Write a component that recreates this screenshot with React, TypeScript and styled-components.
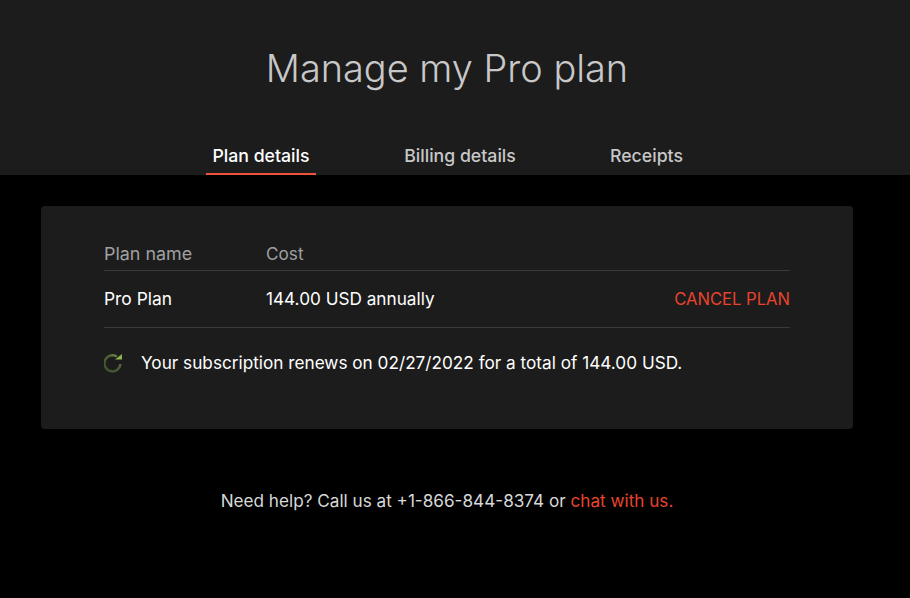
import React from "react";
import styled, { createGlobalStyle } from "styled-components";

const Global = createGlobalStyle`
  html, body { margin: 0; background: #000; }
  body { font-family: Inter, "Open Sans", sans-serif; }
`;
const Header = styled.header`
  background: #1c1c1c;
  height: 175px;
  padding-right: 16px;
  display: flex;
  flex-direction: column;
  align-items: center;
`;
const Title = styled.h1`
  margin: 41px 0 0;
  height: 95px;
  font-size: 37.9px;
  line-height: 54px;
  font-weight: 300;
  color: #c8c8c8;
`;
const Tabs = styled.nav`
  display: flex;
  gap: 81px;
  margin-left: 1px;
`;
const Tab = styled.a<{ $active?: boolean; $w: number }>`
  width: ${(p) => p.$w}px;
  height: 39px;
  box-sizing: border-box;
  text-align: center;
  font-size: 17.7px;
  font-weight: 500;
  line-height: 40px;
  color: ${(p) => (p.$active ? "#fff" : "#c8c8c8")};
  border-bottom: 2px solid ${(p) => (p.$active ? "#f0543f" : "transparent")};
`;
const Card = styled.section`
  margin: 31px 57px 0 41px;
  height: 223px;
  box-sizing: border-box;
  padding: 32px 63px 0;
  background: #1c1c1c;
  border-radius: 4px;
`;
const Row = styled.div<{ $h: number }>`
  display: flex;
  align-items: center;
  box-sizing: content-box;
  height: ${(p) => p.$h - 1}px;
  padding-bottom: 1px;
  border-bottom: 1px solid #3a3a3a;
  font-size: 17.2px;
  line-height: 22px;
  color: #fff;
`;
const Name = styled.span<{ $muted?: boolean }>`
  width: 162px;
  font-size: ${(p) => (p.$muted ? "17.9px" : "17.4px")};
  color: ${(p) => (p.$muted ? "#a0a0a0" : "#fff")};
`;
const Cost = styled.span<{ $muted?: boolean }>`
  flex: 1;
  color: ${(p) => (p.$muted ? "#a0a0a0" : "#fff")};
`;
const Cancel = styled.a`
  font-size: 16.6px;
  color: #e8432e;
`;
const Renew = styled.div`
  display: flex;
  align-items: center;
  gap: 17px;
  height: 69px;
  font-size: 17.2px;
  color: #fff;
`;
const Help = styled.p`
  margin: 61px 16px 0 0;
  text-align: center;
  font-size: 17.15px;
  color: #d8d8d8;
`;
const Link = styled.a`
  color: #e8432e;
`;

export default function App() {
  return (
    <>
      <Global />
      <Header>
        <Title>Manage my Pro plan</Title>
        <Tabs>
          <Tab $active $w={110}>Plan details</Tab>
          <Tab $w={126}>Billing details</Tab>
          <Tab $w={85}>Receipts</Tab>
        </Tabs>
      </Header>
      <Card>
        <Row $h={32}>
          <Name $muted>Plan name</Name>
          <Cost $muted>Cost</Cost>
        </Row>
        <Row $h={56}>
          <Name>Pro Plan</Name>
          <Cost>144.00 USD annually</Cost>
          <Cancel>CANCEL PLAN</Cancel>
        </Row>
        <Renew>
          <svg width="20" height="20" viewBox="0 0 20 20" fill="none">
            <defs>
              <linearGradient id="ring" x1="0" y1="1" x2="1" y2="0">
                <stop offset="0" stopColor="#3f4f2e" />
                <stop offset="0.6" stopColor="#4d5f35" />
                <stop offset="1" stopColor="#7d9a45" />
              </linearGradient>
            </defs>
            <path d="M12.8 3.6A8 8 0 1 0 16.4 11.2" stroke="url(#ring)" strokeWidth="2.4" />
            <path d="M11 6.5h7V1z" fill="#8fb04a" />
          </svg>
          Your subscription renews on 02/27/2022 for a total of 144.00 USD.
        </Renew>
      </Card>
      <Help>
        Need help? Call us at +1-866-844-8374 or <Link>chat with us.</Link>
      </Help>
    </>
  );
}
